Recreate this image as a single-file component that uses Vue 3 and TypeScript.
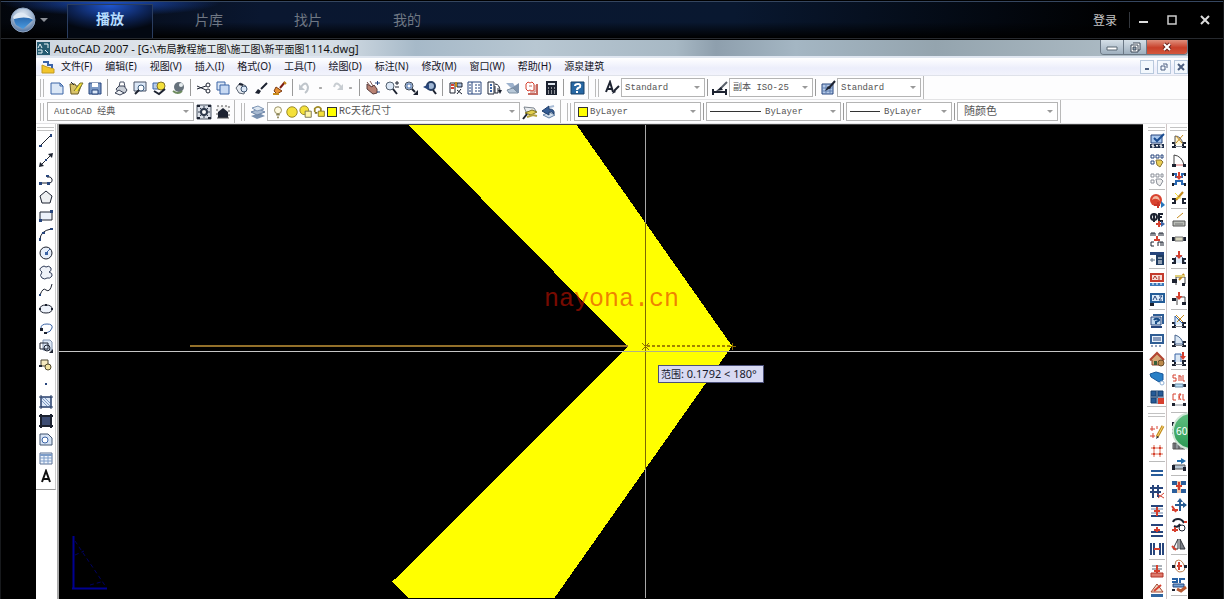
<script setup lang="ts">
import { ref } from 'vue'

// A shape is: path data, fill, stroke, stroke width
type Shape = [string, string, string?, number?]

const K = '#1c2230'
const B = '#3b64a6'
const N = '#27457c'
const L = '#dbe7f6'
const Y = '#f4e03a'
const R = '#d6402f'
const G = '#8b9099'
const O = '#c48a1c'

const circle = (x: number, y: number, r: number): string =>
  `M${x - r} ${y}a${r} ${r} 0 1 0 ${r * 2} 0a${r} ${r} 0 1 0 ${-r * 2} 0z`

const jamb: Shape[] = [
  ['M1 10h3v4h-3M15 10h-3v4h3', 'none', K, 2],
  ['M4 13.500h8', 'none', G, 1],
]
const wallEnds: Shape[] = [['M1 9h3v4h-3M15 9h-3v4h3', 'none', K, 2]]
const downArrow: Shape[] = [['M8 1v6', 'none', R, 2], ['M4.500 5h7l-3.500 4z', R]]

const icons: Record<string, Shape[]> = {
  new: [['M2 3h9l3 3v8h-12z', L, B, 1], ['M11 3v3h3', 'none', B, 1]],
  open: [['M2 4h5l1 2h5l-3 8h-7z', '#d9c36a', '#6b5a20', 1], ['M6 11l6-8h3l-5 8', Y, '#7a7430', 1], ['M3 2l3 3', 'none', K, 1]],
  save: [['M2 3h12v11h-12z', '#7b98c4', N, 1], ['M5 3h6v4h-6z', '#fff'], ['M5 10h6v4h-6z', L, N, 1]],
  print: [['M6 7l1-5h4l1 5', '#fff', '#4a5266', 1], ['M3 9l3-3h5l3 4-2 3h-6z', '#c9ced6', '#3a4256', 1], ['M2 13l4-3 5 3-4 2z', '#eef1f5', '#3a4256', 1]],
  preview: [['M2 2h12v9h-12z', L, '#4b5568', 1], [circle(9, 8, 3), '#fff', '#3d5d7f', 1], ['M7 10l-4 4', 'none', K, 2]],
  publish: [['M2 3h6v6h-6z', '#b7cbe6', B, 1], [circle(10, 6, 4), Y, '#80712a', 1], ['M3 11l5 3 6-5', 'none', K, 2]],
  sphere: [[circle(9, 7, 5), '#66717b'], [circle(11, 5, 2), '#e8eef0'], ['M3 11q5 4 9 0', 'none', '#6d8b5f', 2]],
  cut: [['M1 6l9 4M1 9l9-3', 'none', K, 1], [circle(12, 5, 2), 'none', K, 1], [circle(12, 11, 2), 'none', K, 1]],
  copy: [['M2 2h8v8h-8z', L, B, 1], ['M5 5h9v9h-9z', '#c7d9f3', B, 1]],
  paste: [['M2 8l4-5 6 3-2 8-5-1z', '#e6eaf0', '#5c6674', 1], [circle(10, 9, 3), L, '#3c5370', 1], ['M5 4l4 1', 'none', K, 2]],
  brush: [['M14 3l-6 6', 'none', K, 2], ['M2 13l3-4 3 2-2 3z', K]],
  match: [['M13 2l-5 6', 'none', '#7d1d12', 2], ['M4 7l6 4-5 3-3-3z', '#e59034', '#7d3a12', 1], ['M1 14h6', 'none', O, 2], ['M12 2l2 2', 'none', O, 2]],
  undo: [['M3 7q5-7 7 0q0 4-3 6', 'none', '#bfc5cb', 2], ['M1 4v6h6z', '#bfc5cb']],
  redo: [['M13 7q-5-7-7 0', 'none', '#c8cdd2', 2], ['M15 4v6h-6z', '#c8cdd2']],
  pan: [['M2 4l5 3 2-2 3 4v4l-4 1-6-5z', '#b98273', '#593d3d', 1], ['M2 2l4 5M5 1l3 5', 'none', '#7d5550', 1], ['M10 3h5M12.500 1v4M12 12h3', 'none', N, 1]],
  zoomrt: [[circle(6, 6, 4), L, '#52606f', 1], ['M9 9l4 5', 'none', K, 2], ['M11 3h4M13 1v4M11 7h4', 'none', K, 1]],
  zoomwin: [[circle(6, 6, 4), L, '#3b4656', 1], ['M4 4h4v4h-4z', '#fff', B, 1], ['M9 9l3 3', 'none', K, 2], ['M15 10v5h-5z', K]],
  zoomprev: [[circle(9, 6, 4), '#9fb6d4', '#243b61', 2], ['M11 10l3 4', 'none', K, 2], ['M1 7l6-3v6z', N]],
  props: [['M2 3h5v10h-5z', '#fff', K, 1], ['M3 5h3M3 8h3', 'none', R, 2], ['M9 3h5v4h-5zM9 10l5 4M13 9l-4 5', '#a9c0dd', K, 1], ['M8 2v5', 'none', O, 2]],
  design: [['M1 2h13v12h-13z', '#fff', N, 1], ['M5 2v12M8 5h2M11 5h2M8 8h2M11 8h2M8 11h2M11 11h2M2 5h2M2 8h2M2 11h2', 'none', N, 1]],
  palettes: [['M2 2h6v12h-6z', '#fff', K, 1], ['M4 5h2M4 8h2M4 11h2', 'none', B, 2], ['M9 4q5 0 5 8M9 6v7h3v-5', 'none', K, 1], ['M12 10h4l-2 4z', K]],
  sheet: [['M1 3h7l3 5h-5z', '#9db2cd'], ['M5 9l9-6v10h-9z', '#7f93ac'], ['M2 10l6-2 5 5h-9z', '#b8c8d8', '#7b8ea1', 1]],
  markup: [['M2 4l2-2 2 1 2-1 2 2v6l-2 1-2-1-2 1-2-2z', '#fff', R, 1], ['M13 4v10h-9', 'none', '#c56a60', 2], ['M11 5v7h-5M5 6h3', 'none', '#c56a60', 1]],
  calc: [['M3 1h11v14h-11z', K], ['M5 3h7v2h-7z', '#dfe6ee'], ['M5 8h1M8 8h1M11 8h1M5 11h1M8 11h1M11 11h1M5 13h1M8 13h1M11 13h1', 'none', '#fff', 1]],
  help: [['M2 2h13v12h-13z', '#2767a3', '#174069', 1], ['M6 6q0-2 3-2t2 3q-3 1-3 3M8 11v2', 'none', '#fff', 2]],
  textstyle: [['M2 12l4-10 3 10M4 9h4', 'none', K, 2], ['M10 11l5-5', 'none', K, 2], ['M8 14l2-4 2 2z', K]],
  dimstyle: [['M1 9v6M14 9v6M1 12h13', 'none', K, 2], ['M15 2l-7 7', 'none', '#59606b', 2], ['M4 11l5-4 2 3z', K]],
  tablestyle: [['M2 4h11v10h-11z', '#b3c8e7', N, 1], ['M2 8h11M2 11h11M6 4v10M10 4v10', 'none', '#5f7fb0', 1], ['M15 1l-6 7', 'none', K, 2], ['M5 11l3-5 3 2z', K]],
  gear: [['M1 1h14v14h-14z', '#dbe0e8', '#4c5665', 1], [circle(8, 8, 3), '#fff', '#2f3a4c', 2], ['M8 2v3M8 11v3M2 8h3M11 8h3M4 4l2 2M10 10l2 2M12 4l-2 2M6 10l-2 2', 'none', '#2f3a4c', 1], ['M1 1h3v2h-3zM12 1h3v2h-3zM1 13h3v2h-3zM12 13h3v2h-3z', K]],
  wsave: [['M2 2h12v12h-12z', '#f2f2f2'], ['M3 8l5-4 5 4v6h-10z', K], ['M2 2h2M6 2h2M10 2h2M14 2v2M14 6v2M14 10v2M2 5v2M2 9v2M2 14h12', 'none', '#555', 1]],
  layers: [['M1 12l6 3 8-3-6-3z', '#7890b0'], ['M1 8l6 3 8-3-6-3z', '#a8bad1', '#6b83a5', 1], ['M2 4l5 3 7-2-6-3z', '#dce6f1', '#7f96b5', 1]],
  layerprev: [['M2 3l10 1 2 3-10 1z', '#e9ecef', '#7d858e', 1], ['M3 9l7-3 5 2-6 3z', '#e3cf4f', '#81741f', 1], ['M5 13l6-2 4 1', 'none', '#b5a23c', 2], ['M1 15l4-5', 'none', K, 2]],
  layerstate: [['M2 11l6-3 6 3-6 3z', '#d4dfeb', '#6583a9', 1], ['M1 7l7-5v3q6 0 5 5-2-3-5-2v3z', '#355c93', '#1f3e6b', 1], ['M9 3l4-1', 'none', '#a9bcd6', 2]],
  line: [['M2 13l11-11', 'none', K, 1], ['M1 12h3v2h-3zM12 1h2v3h-2z', N]],
  xline: [['M3 13l10-10', 'none', K, 1], ['M1 15l1-5 4 4zM15 1l-5 1 4 4z', K], ['M7 7h2v2h-2z', N]],
  pline: [['M2 12h10q3-1 2-4t-5-2', 'none', K, 1], ['M1 11h3v3h-3zM9 11h3v3h-3zM8 4h3v2h-3z', N]],
  polygon: [['M8 2l6 5-2 7h-8l-2-7z', '#eef0f2', K, 1]],
  rect: [['M2 4h12v8h-12z', '#edf2fa', K, 1], ['M1 11h3v3h-3zM12 2h3v3h-3z', N]],
  arc: [['M2 14q0-9 11-11', 'none', K, 1], ['M1 12h2v3h-2zM4 6h3v2h-3zM12 2h3v2h-3z', N]],
  circle: [[circle(8, 8, 6), '#e6eefa', K, 1], ['M8 8l4-4', 'none', B, 1], ['M7 7h3v3h-3z', B]],
  cloud: [['M4 8q-4-3 0-5 2-2 4 0 3-2 5 1 1 3-2 4 4 1 3 4-2 3-5 2-2 2-5 0-3-2 0-6z', '#eff2f8', '#303c58', 1]],
  spline: [['M2 13q3-8 6-5 4 3 6-6', 'none', K, 1], ['M1 12h2v2h-2z', N]],
  ellipse: [['M2 8q0-4 6-4t6 4-6 4-6-4z', '#eef3fb', K, 1], ['M1 7h2v2h-2zM13 7h2v2h-2zM7 3h2v2h-2z', K]],
  earc: [['M3 8q0-4 6-4t5 4-6 5', 'none', B, 1], ['M2 8h3v3h-3zM6 12h3v2h-3z', K]],
  insert: [['M5 2h7l2 2v8h-9z', L, '#8294af', 1], ['M2 5h8v6h-8z', 'none', K, 1], [circle(9, 10, 3), 'none', K, 1], ['M15 11v4h-4z', K]],
  block: [['M3 3h7v6h-7z', '#f6eac0', '#4b4432', 1], [circle(10, 10, 3), '#f0e2a0', '#514a2d', 1], ['M1 8h3v2h-3z', K]],
  point: [['M7 7h2v2h-2z', N]],
  hatch: [['M3 3h10v10h-10z', L, N, 1], ['M3 6l7 7M3 3l10 10M6 3l7 7', 'none', '#7d99c4', 1], ['M1 3h14M1 13h14M3 1v14M13 1v14', 'none', '#243a63', 1]],
  gradient: [['M3 3h10v10h-10z', '#3d4d74'], ['M1 3h14M1 13h14M3 1v14M13 1v14', 'none', K, 2]],
  region: [['M2 3h8l4 4v7h-12z', '#d6e3f4', '#3f526f', 1], [circle(7, 9, 3), '#fff', B, 1]],
  table: [['M2 3h12v11h-12z', '#eef4fc', '#5a7194', 1], ['M2 5h12', 'none', '#7c9cc8', 2], ['M2 8h12M2 11h12M6 4v10M10 4v10', 'none', '#7c9cc8', 1]],
  mtext: [['M4 13l4-11 4 11M5 10h6', 'none', '#111', 2]],
  // Architecture plug-in, first column
  sys: [['M2 2h11v8h-11z', '#a8c6ec', N, 1], ['M15 1l-7 7-3-3', 'none', '#1a4c91', 2], ['M1 11h14v4h-14z', '#20304d'], ['M5 12h-2v1h2v1h-2M7 12l1 1 1-1M8 13v1M13 12h-2v1h2v1h-2', 'none', '#fff', 1]],
  settings: [['M2 3h3v3h-3zM7 3h3v3h-3zM12 3h2v3h-2zM2 9h3v3h-3z', '#fff', N, 1], ['M7 8h5l2 2-3 5-3-2z', '#e9cd54', '#8a7430', 1]],
  settingsoff: [['M2 3h3v3h-3zM7 3h3v3h-3zM12 3h2v3h-2zM2 9h3v3h-3z', '#fff', G, 1], ['M7 8h5l2 2-3 5-3-2z', '#eee', G, 1]],
  globe: [[circle(7, 7, 6), '#d9432f'], ['M3 7q1-4 4-4t4 5q-4-4-8-1z', '#f2b8a0'], ['M5 12h6M9 9v6', 'none', '#c93426', 2], ['M12 8l4 4-4 3z', '#2675bb']],
  axis: [[circle(5, 5, 3), 'none', K, 2], ['M5 1v9M14 2h-4v7h4M10 5h3', 'none', K, 2], ['M7 12h6M10 9v6', 'none', R, 2], ['M12 9l4 3-4 3z', B]],
  units: [['M2 5v-3h4v3M4 2v3M10 5v-3h4v3M12 2v3M5 11h-3v4h3M9 15v-4h5v4M12 11v4', 'none', K, 1], ['M8 5v4M5 9h6', 'none', R, 2]],
  panel: [['M1 2h14v3h-14z', N], ['M7 5h8v10h-8z', '#203d63'], ['M9 8h4M9 11h4M9 13h4', 'none', '#fff', 1], ['M1 10h5M3 8v4', 'none', '#5c7085', 1]],
  a1: [['M2 2h12v7h-12z', '#f6ded9', '#c43a2d', 2], ['M4 7l2-3 2 3M10 4v4', 'none', '#a72e24', 1], ['M1 11h14v3h-14z', '#3a78b9'], ['M4 11v2M8 11v2M12 11v2', 'none', '#fff', 1]],
  a2: [['M2 3h13v8h-13z', '#dcecfa', '#245d98', 2], ['M4 9l2-4 2 4M10 5h3l-3 4h3', 'none', N, 1], ['M1 12h4v3h-4z', K]],
  ask: [['M2 4h10v8h-10z', '#c2d9ef', N, 1], ['M4 2h10v9', 'none', '#2f5d94', 2], ['M5 7q1-2 4-1t-2 3v2', 'none', '#174b86', 2], ['M2 14h11', 'none', N, 2]],
  board: [['M2 3h12v8h-12z', '#eaf2fb', '#2f5d94', 2], ['M4 6h8M4 8h8M3 13v2M7 13v2M11 13v2', 'none', N, 1]],
  home: [['M1 9l7-7 7 7h-2v5h-10v-5z', '#d6a877', '#8c3c25', 1], ['M1 9l7-7 7 7', 'none', '#b34531', 2], ['M5 10h3v4h-3z', '#375f3a'], [circle(12, 12, 3), '#bd8a4b', '#6a4e2b', 1]],
  shield: [['M1 4l6-2 7 2v6l-4 2-8-5z', '#287fc6', '#18579a', 1], [circle(13, 13, 2), '#fff', '#8fb0d6', 1]],
  floor: [['M2 2h5v5h-5zM9 2h5v5h-5zM2 9h5v5h-5z', '#255b98', '#173f6f', 1], ['M9 9h6v6h-6z', R], ['M8 1v14M1 8h14', 'none', '#174173', 1]],
  draw: [['M1 5h5M3 2v5M1 12h5M4 9v5M8 2v3', 'none', R, 1], ['M14 2l-6 11', 'none', O, 3], ['M14 2l-6 11', 'none', '#f0d779', 1], ['M7 15l1-3 2 1z', K]],
  grid: [['M2 5h12M2 11h12M5 2v12M11 2v12', 'none', '#d9694f', 1], ['M4 4h2v2h-2zM10 4h2v2h-2zM4 10h2v2h-2zM10 10h2v2h-2z', R]],
  wall: [['M2 6h12M2 10h12', 'none', '#285b99', 2]],
  wallcut: [['M1 4h13M1 8h11M4 1v13M9 1v12', 'none', N, 2], ['M8 10l7 4M9 14l6-5', 'none', R, 1]],
  wallh: [['M2 3h12M2 13h12', 'none', N, 2], ['M2 6h12M2 10h12', 'none', '#6c86ab', 1], ['M8 4v9M5 8h6', 'none', R, 2]],
  walloff: [['M2 3h12M2 10h12M2 14h12', 'none', N, 2], ['M8 5v5M5 8h6', 'none', R, 2]],
  wallv: [['M2 2v12M5 2v12M11 2v12M14 2v12', 'none', N, 2], ['M5 8h6', 'none', R, 2]],
  column: [['M3 3h10M3 6h10', 'none', '#596575', 1], ['M8 2v9M5 8h6', 'none', R, 2], ['M2 10h12v4h-12z', '#dd786a', '#b23227', 1]],
  roof: [['M2 10l6-8 6 8z', '#efe0d0', '#a3462e', 1], ['M5 9l7-6', 'none', R, 2], ['M2 12h12v3h-12z', '#2f659f']],
  // Architecture plug-in, second column
  doorpen: [...jamb, ['M4 12v-9q6 0 8 8', '#fff7d5', '#555', 1], ['M5 3l6 7M12 2l-7 8', 'none', O, 1]],
  door: [['M3 13v-10q8 1 10 10', 'none', '#444', 1], ['M3 13h10', 'none', '#d36969', 1], ['M1 12h4v3h-4zM12 12h3v3h-3z', K]],
  doorins: [['M1 3h4v3h6v-3h4M1 13h4v-3h6v3h4', 'none', '#2867b1', 2], ['M1 2h2v3h-2zM13 2h2v3h-2zM1 12h2v3h-2zM13 12h2v3h-2z', K], ...downArrow],
  wand: [...wallEnds, ['M5 10l7-8', 'none', O, 2], ['M4 3l3 3M5 8h5', 'none', Y, 1]],
  winpen: [['M2 9h12v5h-12z', '#b9bcb6', '#555', 1], ['M4 12h8', 'none', '#777', 1], ['M6 6l6-5', 'none', O, 1]],
  window: [['M1 6h3v4h-3zM12 6h3v4h-3z', K], ['M4 6h8v4h-8z', '#d7d6bf', '#777', 1]],
  winins: [['M3 13v-4l3-3h4l3 3v4', '#e2eefb', '#5674a0', 1], ...wallEnds, ...downArrow],
  bay: [['M5 13v-8h9v7', '#fff', '#444', 1], ['M1 7h5v4h-5zM11 11h3v3h-3z', K], ['M8 8l5-6', 'none', O, 2], ['M4 4h10', 'none', '#e0cf7a', 2]],
  bayins: [['M6 14v-8h8v7', '#fff', '#444', 1], ['M1 7h4v3h-4zM11 11h4v3h-4z', K], ...downArrow],
  doorx: [...jamb, ['M4 12v-9l8 8', '#dcecf9', B, 1], ['M6 9l7-7M5 2l7 7', 'none', O, 1]],
  doorarc: [...jamb, ['M4 12v-9q7 2 8 9z', '#dbe8f5', '#48658e', 1]],
  doordown: [...jamb, ['M4 11v-8h6v8', '#dbe8f5', B, 1], ['M12 1v6', 'none', R, 2], ['M9 5h6l-3 4z', R]],
  sill: [['M5 2h-3v3h3v3h-3M8 8v-6M8 3h2v5M12 2v6h2', 'none', R, 1], ['M1 11h3v3h-3zM12 11h3v3h-3z', K], ['M4 11h8v3h-8z', '#b7dcf2', '#6b8ba8', 1]],
  cill: [['M5 2h-3v6h3M8 8v-6h2l-2 3 2 3M12 2v6h2', 'none', R, 1], ['M1 11h3v3h-3zM12 11h3v3h-3z', K], ['M4 13h8', 'none', G, 1]],
  frame: [['M1 4h3v2h-3M1 11h3v3h-3', 'none', K, 2], ['M7 3h6v9h-6z', '#ddd', '#888', 1]],
  shade: [['M2 5h12v6h-12z', '#8f949a', '#555', 1], ['M4 5v6M8 5v6M12 5v6', 'none', '#444', 1]],
  moveright: [['M2 8h12v4h-12z', '#b7c5d2', '#555', 1], ['M1 8h3v5h-3zM12 10h3v4h-3z', K], ['M6 4h6', 'none', '#246fae', 2], ['M10 1l5 3-5 3z', '#246fae']],
  span: [['M1 3h4v2h-4M15 3h-4v2h4M1 11h4v2h-4M15 11h-4v2h4', 'none', '#2b5f9c', 2], ['M6 2h4v12h-4z', '#f3c9a9'], ['M8 3v8M5 7h6', 'none', R, 2]],
  move: [['M9 2v11M4 7h11', 'none', '#275c93', 2], ['M6 4l3-4 3 4zM12 4l4 3-4 3z', '#275c93'], ['M1 8l4 6M1 12h6', 'none', R, 2]],
  rotate: [['M2 5q1-3 5-3t6 4M3 9q4 2 6-2', 'none', K, 2], [circle(11, 11, 3), 'none', K, 1], ['M1 13h6M4 10v5M13 5h3', 'none', R, 2]],
  mirror: [['M2 13l5-10v10z', '#eef0f4', '#33363c', 1], ['M9 3v10h5z', '#7c8088', '#33363c', 1], ['M1 10l4 4', 'none', R, 2]],
  bulge: [['M5 3q5-3 8 4t-5 7q-6-3-3-11z', '#fff', '#b97e51', 1], ['M1 7h3v3h-3zM13 7h3v3h-3z', K], ['M8 4v8M6 8h5', 'none', R, 2]],
  combine: [['M1 2h5v3h-5M14 2h-5v4', 'none', '#2761a3', 2], ['M2 7h11v3h-11z', '#6fa1d3', N, 1], ['M6 12l4 2 5-4', 'none', '#b65932', 3], ['M1 12h3v2h-3z', K]],
  bulb: [[circle(8, 6, 4), '#fffbe0', '#8b8354', 1], ['M6 11h4M7 14h2', 'none', '#8b8354', 2]],
  sun: [[circle(8, 8, 6), Y, '#8b7d1e', 1]],
  freeze: [[circle(6, 6, 5), Y, '#8b7d1e', 1], ['M7 7h7v7h-7z', '#fff6a6', '#706b47', 1]],
  lock: [['M2 8v-4q4-4 7 0v3', 'none', '#9d8822', 2], ['M6 7h7v6h-7z', Y, '#807125', 1], ['M2 9h3', 'none', '#807125', 2]],
}

type Item =
  | { kind: 'icon'; name: string }
  | { kind: 'sep' }
  | { kind: 'drop' }
  | { kind: 'combo'; label: string; value: string; size: string; lead?: 'swatch' | 'long' | 'short' | 'layer' }

const sep: Item = { kind: 'sep' }
const drop: Item = { kind: 'drop' }
const ic = (names: string): Item[] => names.split(' ').map((name) => ({ kind: 'icon', name }))

const rows: Item[][][] = [
  [
    [
      ...ic('new open save'), sep,
      ...ic('print preview publish sphere'), sep,
      ...ic('cut copy paste brush match'), sep,
      ...ic('undo'), drop, ...ic('redo'), drop, sep,
      ...ic('pan zoomrt zoomwin zoomprev'), sep,
      ...ic('props design palettes sheet markup calc'), sep,
      ...ic('help'),
    ],
    [
      ...ic('textstyle'),
      { kind: 'combo', label: 'Text style', value: 'Standard', size: 'style' }, sep,
      ...ic('dimstyle'),
      { kind: 'combo', label: 'Dimension style', value: '副本 ISO-25', size: 'style' }, sep,
      ...ic('tablestyle'),
      { kind: 'combo', label: 'Table style', value: 'Standard', size: 'style' },
    ],
  ],
  [
    [{ kind: 'combo', label: 'Workspace', value: 'AutoCAD 经典', size: 'workspace' }, ...ic('gear wsave')],
    [
      ...ic('layers'),
      { kind: 'combo', label: 'Layer', value: 'RC天花尺寸', size: 'layer', lead: 'layer' },
      ...ic('layerprev layerstate'),
    ],
    [
      { kind: 'combo', label: 'Color', value: 'ByLayer', size: 'color', lead: 'swatch' }, sep,
      { kind: 'combo', label: 'Linetype', value: 'ByLayer', size: 'linetype', lead: 'long' }, sep,
      { kind: 'combo', label: 'Lineweight', value: 'ByLayer', size: 'weight', lead: 'short' }, sep,
      { kind: 'combo', label: 'Plot style', value: '随颜色', size: 'plot' },
    ],
  ],
]

const layerIcons = ['bulb', 'sun', 'freeze', 'lock']
const drawTools =
  'line xline pline polygon rect arc circle cloud spline ellipse earc insert block point hatch gradient region table mtext'.split(' ')

// "|" is a rule between tool groups, "=" starts a new docked bar, "+" is a wide rule
const archA =
  'sys settings settingsoff | globe axis units panel | a1 a2 | ask board home shield floor = draw grid | wall wallcut wallh walloff wallv | column roof'.split(' ')
const archB =
  'doorpen door doorins wand | winpen window winins | bay bayins | doorx doorarc doordown | sill cill + frame shade moveright | span move rotate mirror | bulge combine |'.split(' ')
const archBars = [archA, archB]

const tabs = ['播放', '片库', '找片', '我的']
const active = ref('播放')
const menus = ['文件(F)', '编辑(E)', '视图(V)', '插入(I)', '格式(O)', '工具(T)', '绘图(D)', '标注(N)', '修改(M)', '窗口(W)', '帮助(H)', '源泉建筑']
</script>

<template>
  <div class="player">
    <header class="top">
      <button class="logo" aria-label="Main menu">
        <svg width="26" height="26" viewBox="0 0 26 26">
          <defs>
            <radialGradient id="ball" cx="50%" cy="30%" r="70%">
              <stop offset="0" stop-color="#e4ecf5" />
              <stop offset="0.6" stop-color="#9db3ce" />
              <stop offset="1" stop-color="#51709c" />
            </radialGradient>
            <linearGradient id="arrow" x1="0" y1="0" x2="0" y2="1">
              <stop offset="0" stop-color="#1f5aa0" />
              <stop offset="1" stop-color="#4b9be0" />
            </linearGradient>
          </defs>
          <circle cx="13" cy="13" r="12" fill="url(#ball)" stroke="#8fa5c2" />
          <path d="M4 12q3-4 9-3v-2l10 6-10 9-7-4q-2-3-2-6z" fill="url(#arrow)" />
          <path d="M3 10q6-7 12-3l8 5q-9-3-19 0z" fill="#dfe9f4" />
        </svg>
        <span class="caret"></span>
      </button>
      <nav class="tabs">
        <button v-for="t in tabs" :key="t" class="tab" :class="{ on: t === active }" @click="active = t">{{ t }}</button>
      </nav>
      <div class="account">
        <button class="login">登录</button>
        <button class="sys" aria-label="Minimize"><svg width="12" height="12"><path d="M1 8h9" stroke="#ddd" stroke-width="2" /></svg></button>
        <button class="sys" aria-label="Maximize"><svg width="12" height="12"><path d="M2 2h8v8h-8z" fill="none" stroke="#ccc" stroke-width="1.500" /></svg></button>
        <button class="sys" aria-label="Close"><svg width="12" height="12"><path d="M2 2l8 8M10 2l-8 8" stroke="#ddd" stroke-width="2" /></svg></button>
      </div>
    </header>

    <main class="cad">
      <div class="title">
        <svg class="appicon" width="13" height="13" viewBox="0 0 13 13">
          <path d="M0 0h13v13h-13z" fill="#245a70" />
          <path d="M1 6l2-4 2 4M7 2h4v4M1 8h4v3h-4M8 8l3 3" stroke="#e6f4f8" fill="none" />
        </svg>
        <h1>AutoCAD 2007 - [G:\<span>布局教程施工图</span>\<span>施工图</span>\<span>新平面图</span>1114.dwg]</h1>
        <div class="winbtns">
          <button aria-label="Minimize window"><svg width="12" height="10"><path d="M1 5h10v3h-10z" fill="#fff" stroke="#596673" /></svg></button>
          <button aria-label="Restore window"><svg width="12" height="11"><path d="M4 1h7v7h-2M2 3h7v7h-7z" fill="#fff" stroke="#3f4b58" /><path d="M4 5h3v3h-3z" fill="#8fa2b4" stroke="#3f4b58" /></svg></button>
          <button class="close" aria-label="Close window"><svg width="12" height="10"><path d="M3 2l6 6M9 2l-6 6" stroke="#6d231b" stroke-width="4" /><path d="M3 2l6 6M9 2l-6 6" stroke="#fff" stroke-width="2" /></svg></button>
        </div>
      </div>

      <div class="menu">
        <svg class="docicon" width="14" height="14" viewBox="0 0 14 14">
          <path d="M2 2h5v3h4v3" fill="none" stroke="#3a63ab" stroke-width="2" />
          <path d="M1 5l5 2 7 2v4h-12z" fill="#f2c52c" stroke="#c29a20" />
        </svg>
        <button v-for="m in menus" :key="m">{{ m }}</button>
        <div class="docbtns">
          <button aria-label="Minimize drawing"><svg width="8" height="8"><path d="M2 6h4" stroke="#4c5f80" stroke-width="2" /></svg></button>
          <button aria-label="Restore drawing"><svg width="8" height="8"><path d="M3 1h4v4M1 3h4v4h-4z" fill="none" stroke="#4c5f80" /></svg></button>
          <button aria-label="Close drawing"><svg width="8" height="8"><path d="M1 1l6 6M7 1l-6 6" stroke="#4c5f80" stroke-width="2" /></svg></button>
        </div>
      </div>

      <div v-for="(row, r) in rows" :key="r" class="row">
        <div v-for="(group, g) in row" :key="g" class="group">
          <span class="grip"></span>
          <template v-for="(it, i) in group" :key="i">
            <span v-if="it.kind === 'sep'" class="rule"></span>
            <span v-else-if="it.kind === 'drop'" class="drop"></span>
            <button v-else-if="it.kind === 'icon'" class="tool" :aria-label="it.name">
              <svg width="16" height="16" viewBox="0 0 16 16">
                <path v-for="(s, k) in icons[it.name]" :key="k" :d="s[0]" :fill="s[1]" :stroke="s[2]" :stroke-width="s[3]" />
              </svg>
            </button>
            <label v-else class="combo" :class="it.size">
              <template v-if="it.lead === 'layer'">
                <svg v-for="n in layerIcons" :key="n" width="14" height="14" viewBox="0 0 16 16">
                  <path v-for="(s, k) in icons[n]" :key="k" :d="s[0]" :fill="s[1]" :stroke="s[2]" :stroke-width="s[3]" />
                </svg>
              </template>
              <span v-if="it.lead === 'layer' || it.lead === 'swatch'" class="swatch"></span>
              <span v-else-if="it.lead" class="stroke" :class="it.lead"></span>
              <select :aria-label="it.label"><option>{{ it.value }}</option></select>
            </label>
          </template>
        </div>
      </div>

      <div class="work">
        <div class="leftdock">
          <div class="drawbar">
            <span class="hgrip"></span>
            <div class="drawtools">
              <button v-for="n in drawTools" :key="n" class="tool" :aria-label="n">
                <svg width="16" height="16" viewBox="0 0 16 16">
                  <path v-for="(s, k) in icons[n]" :key="k" :d="s[0]" :fill="s[1]" :stroke="s[2]" :stroke-width="s[3]" />
                </svg>
              </button>
            </div>
          </div>
        </div>

        <div class="canvas">
          <svg class="drawing" width="100%" height="100%">
            <defs>
              <clipPath id="band"><path d="M349 0H517L673 222L494 476H351L333 458L569 223Z" /></clipPath>
            </defs>
            <path d="M349 0H517L673 222L494 476H351L333 458L569 223Z" fill="#ffff00" shape-rendering="crispEdges" />
            <g shape-rendering="crispEdges">
              <path d="M131 222H569" stroke="#93702a" stroke-width="2" />
              <line x1="586.500" y1="0" x2="586.500" y2="100%" stroke="#a8a8a8" />
              <line x1="586.500" y1="0" x2="586.500" y2="100%" stroke="#7d6a00" clip-path="url(#band)" />
              <line x1="0" y1="227.500" x2="100%" y2="227.500" stroke="#c6c6c6" />
              <line x1="0" y1="227.500" x2="100%" y2="227.500" stroke="#b0b088" clip-path="url(#band)" />
              <path d="M588 222H673" stroke="#a08400" stroke-width="2" stroke-dasharray="3 2" />
            </g>
            <path d="M583 219l7 7M590 219l-7 7M670 222.500h7M673.500 219v7" stroke="#8a6a00" fill="none" />
            <g stroke="#000091" fill="none">
              <path d="M14.500 412v52M13 464.500h35" stroke-width="2" />
              <path d="M16 417l31 46M16 431l9-4M31 461l11-3" stroke="#000060" stroke-dasharray="4 3" />
            </g>
          </svg>
          <span class="mark">nayona.cn</span>
          <span class="tip"><span>范围</span>: 0.1792 &lt; 180°</span>
        </div>

        <div class="rightdock">
          <div v-for="(bar, b) in archBars" :key="b" class="archbar">
            <span class="hgrip"></span>
            <template v-for="(n, i) in bar" :key="i">
              <span v-if="n === '|'" class="hrule"></span>
              <span v-else-if="n === '+'" class="hrule wide"></span>
              <span v-else-if="n === '='" class="split"><span class="hgrip"></span></span>
              <button v-else class="tool" :aria-label="n">
                <svg width="16" height="16" viewBox="0 0 16 16">
                  <path v-for="(s, k) in icons[n]" :key="k" :d="s[0]" :fill="s[1]" :stroke="s[2]" :stroke-width="s[3]" />
                </svg>
              </button>
            </template>
          </div>
          <button class="badge">60</button>
        </div>
      </div>
    </main>
  </div>
</template>

<style>
html,
body {
  background: #000;
}
</style>

<style scoped>
* {
  box-sizing: border-box;
}
.player {
  display: flex;
  flex-direction: column;
  height: 100vh;
  overflow: hidden;
  background: #000;
  border: 1px solid #17191c;
  border-top-color: #000;
  border-bottom: 0;
  font-family: "Noto Sans", "Noto Sans CJK SC", sans-serif;
}
button {
  display: flex;
  align-items: center;
  justify-content: center;
  flex: none;
  margin: 0;
  padding: 0;
  border: 0;
  background: none;
  font: inherit;
  color: inherit;
}
svg {
  display: block;
  flex: none;
}

.top {
  display: flex;
  flex: none;
  height: 38px;
  border-top: 1px solid #35465f;
  border-bottom: 1px solid #26292e;
  background:
    linear-gradient(transparent 20px, #000 36px),
    radial-gradient(ellipse 110px 14px at 110px 0, #1c50c4, transparent),
    linear-gradient(90deg, #03060c 0, #0a1730 260px, #091830 60%, #000 92%);
}
.logo {
  width: 66px;
  gap: 4px;
  padding-right: 10px;
}
.caret {
  border: 4px solid transparent;
  border-top-color: #8b8f96;
  border-bottom: 0;
}
.tabs {
  display: flex;
  gap: 13px;
}
.tab {
  width: 86px;
  padding-bottom: 2px;
  font-size: 14px;
  color: #6f7783;
}
.tab.on {
  margin-top: 2px;
  padding-bottom: 7px;
  border: 1px solid #2a3d5f;
  border-bottom: 0;
  background: radial-gradient(ellipse 64px 26px at 50% 0, #2056d0, #0d2458 60%, #030812);
  color: #b5dcff;
  font-weight: 700;
}
.account {
  display: flex;
  align-items: center;
  margin-left: auto;
  padding-right: 3px;
}
.login {
  height: 16px;
  padding: 0 12px;
  border-right: 1px solid #33373d;
  font-size: 12px;
  color: #c4c4c4;
}
.sys {
  width: 28px;
}
.sys:last-child {
  width: 30px;
  margin-left: 4px;
}

.cad {
  display: flex;
  flex-direction: column;
  flex: 1;
  min-height: 0;
  margin: 1px 35px 0;
  background: #fdfdfe;
  color: #1b1b24;
}
.title {
  display: flex;
  align-items: flex-start;
  flex: none;
  height: 18px;
  border-bottom: 2px solid #dfe6f0;
  background: linear-gradient(90deg, #ccd5df, #e6eaee 160px, #d3dce4 300px, #a6b9c8 380px, #b8c7d2 500px, #a7b8c4 640px, #8e9fad 680px, #a4b6c3 760px, #94a4ae 900px, #b5c3cc);
}
.appicon {
  margin: 2px 4px 0 1px;
}
h1 {
  margin: 0;
  font-size: 11px;
  line-height: 17px;
  font-weight: 400;
  white-space: nowrap;
  color: #111;
}
h1 span,
.tip span {
  font-size: 10px;
}
.winbtns {
  display: flex;
  margin-left: auto;
  border: 1px solid #6b7885;
  border-top: 0;
  border-radius: 0 0 4px 4px;
  overflow: hidden;
}
.winbtns button {
  width: 23px;
  height: 14px;
  border-right: 1px solid #6b7885;
  background: linear-gradient(#d5dfe7, #9eafbe);
}
.winbtns .close {
  width: 40px;
  border: 0;
  background: linear-gradient(#e0917e, #c8402a 55%, #d4573c);
}

.menu {
  display: flex;
  align-items: center;
  flex: none;
  gap: 13px;
  height: 18px;
  padding-left: 5px;
  background: linear-gradient(#fff, #eceefb 60%, #f2f3fc);
  border-bottom: 1px solid #dfe2ea;
  font-size: 10px;
  line-height: 17px;
  color: #15151f;
}
.docicon {
  margin-right: -7px;
}
.docbtns {
  display: flex;
  gap: 3px;
  margin-left: auto;
}
.docbtns button {
  width: 14px;
  height: 14px;
  border: 1px solid #b9c9dd;
  background: #f3f8fd;
}

.row {
  display: flex;
  flex: none;
  height: 24px;
  background: #fdfdfe;
  border-bottom: 1px solid #e3e3e5;
}
.group {
  display: flex;
  align-items: center;
  padding-right: 2px;
  border-right: 1px solid #b9b9b9;
  margin-right: 2px;
}
.grip {
  width: 4px;
  height: 18px;
  margin: 0 3px 0 4px;
  border: 1px solid #bbb;
  border-width: 0 1px;
}
.tool {
  width: 19px;
  height: 19px;
}
.rule {
  width: 1px;
  height: 17px;
  margin: 0 3px;
  background: #9a9a9a;
}
.combo + .rule {
  margin: 0 2px;
}
.drop {
  width: 11px;
  height: 2px;
  background: radial-gradient(circle, #aaa 1px, transparent 2px);
}
.combo {
  display: flex;
  align-items: center;
  height: 19px;
  padding-left: 3px;
  border: 1px solid #b4b4b4;
  background: #fff;
}
.combo::after {
  content: "";
  flex: none;
  margin-right: 4px;
  border: 3px solid transparent;
  border-top-color: #999;
  border-bottom: 0;
}
.combo select {
  flex: 1;
  min-width: 0;
  padding: 0;
  border: 0;
  appearance: none;
  background: transparent;
  font-family: "Liberation Mono", "Noto Sans CJK SC", monospace;
  font-size: 9px;
  line-height: 16px;
  color: #555;
}
.combo.style {
  width: 84px;
}
.combo.workspace {
  width: 147px;
  padding-left: 6px;
}
.combo.layer {
  width: 253px;
}
.combo.layer select {
  font-size: 10px;
}
.combo.plot select {
  font-size: 11px;
}
.combo.color {
  width: 127px;
}
.combo.linetype {
  width: 135px;
}
.combo.weight {
  width: 106px;
}
.combo.plot {
  width: 101px;
  padding-left: 6px;
}
.swatch {
  flex: none;
  width: 10px;
  height: 10px;
  margin-right: 2px;
  border: 1px solid #333;
  background: #ffff00;
}
.stroke {
  flex: none;
  height: 1px;
  margin-right: 4px;
  background: #333;
}
.stroke.long {
  width: 51px;
}
.stroke.short {
  width: 30px;
}

.work {
  display: flex;
  flex: 1;
  min-height: 0;
  overflow: hidden;
}
.leftdock {
  flex: none;
  width: 23px;
  border-right: 2px solid #a9a9a9;
  background: #fff;
}
.drawbar {
  width: 20px;
  padding-top: 3px;
  border-right: 1px solid #ccc;
  border-bottom: 1px solid #999;
}
.hgrip {
  display: block;
  flex: none;
  width: 17px;
  height: 4px;
  margin: 0 auto;
  border: 1px solid #c3c3c3;
  border-width: 1px 0;
}
.drawtools {
  display: grid;
  grid-auto-rows: 1fr;
  height: 354px;
  margin: 1px 0 3px;
}
.drawtools .tool {
  height: auto;
}
.canvas {
  position: relative;
  flex: 1;
  min-width: 0;
  overflow: hidden;
  background: #000;
  border-top: 1px solid #444;
}
.drawing {
  position: absolute;
  inset: -1px 0 0;
}
.mark {
  position: absolute;
  left: 485px;
  top: 160px;
  font-family: "Liberation Mono", monospace;
  font-size: 25px;
  line-height: 30px;
  color: rgba(225, 20, 0, 0.55);
}
.tip {
  position: absolute;
  left: 599px;
  top: 240px;
  padding: 0 6px 0 2px;
  border: 1px solid #4a4f78;
  background: #d8daf3;
  font-size: 11px;
  line-height: 16px;
  white-space: nowrap;
  color: #16182c;
}
.rightdock {
  position: relative;
  display: flex;
  flex: none;
  width: 45px;
  overflow: hidden;
  background: #fff;
}
.archbar {
  display: flex;
  flex-direction: column;
  align-items: center;
  width: 22px;
  padding: 3px 0 0 2px;
}
.archbar:first-child {
  width: 24px;
  padding-left: 4px;
  border-right: 1px solid #cfc6c6;
}
.archbar .tool {
  flex: none;
}
.hrule {
  flex: none;
  width: 16px;
  height: 1px;
  margin: 1px 0;
  background: #bbb;
}
.hrule.wide {
  margin: 3px 0 4px;
}
.split {
  flex: none;
  width: 100%;
  height: 16px;
  padding-top: 6px;
  border-top: 1px solid #bbb;
}
.badge {
  position: absolute;
  left: 29px;
  top: 288px;
  justify-content: flex-start;
  width: 38px;
  height: 38px;
  padding-left: 2px;
  border: 2px solid #cfe6d6;
  border-radius: 50%;
  background: linear-gradient(#5fbf80, #2c9a55);
  font-size: 10px;
  color: #fff;
}
</style>
